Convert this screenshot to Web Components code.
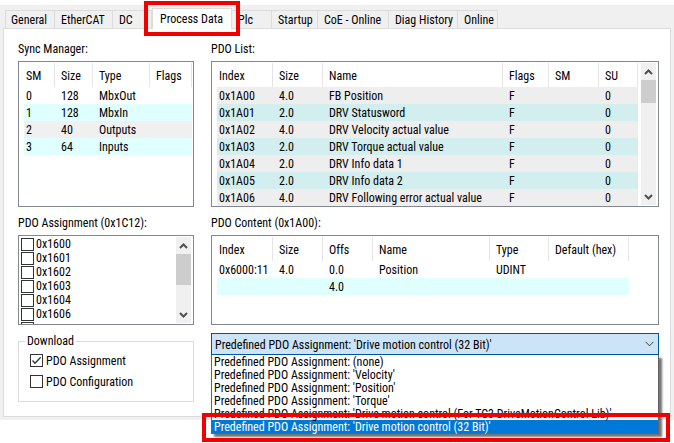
<!DOCTYPE html>
<html lang="en">
<head>
<meta charset="utf-8">
<title>Process Data</title>
<style>
  body {
    display: flow-root;
    box-sizing: border-box;
    min-height: 100vh;
    margin: 0;
    padding-bottom: 23px;
    background: #fff;
    color: #000;
    font: 12px/16px "Roboto Condensed", "Liberation Sans Narrow", "Liberation Sans", sans-serif;
    --line: #dcdcdc;
    --edge: #828790;
    --face: #f0f0f0;
    --mark: #f00000;
  }
</style>
</head>
<body>
<process-dialog></process-dialog>
<script>
class Base extends HTMLElement {
  paint(html) {
    if (!this.shadowRoot) this.attachShadow({ mode: "open" });
    this.shadowRoot.innerHTML = html;
  }
}

customElements.define("scroll-bar", class extends Base {
  connectedCallback() {
    this.paint(`
      <style>
        :host { display: flex; flex-direction: column; width: 15px; margin: 0 1px 1px 0; background: var(--face); }
        svg { display: block; width: 15px; height: 17px; fill: none; stroke: #505050; stroke-width: 2; }
        .track { flex: 1; }
        .thumb { height: var(--thumb, 23px); background: #cdcdcd; }
      </style>
      <svg viewBox="0 0 15 17"><path d="M4 11 L7.5 7.5 L11 11"/></svg>
      <div class="track"><div class="thumb"></div></div>
      <svg viewBox="0 0 15 17"><path d="M4 7 L7.5 10.5 L11 7"/></svg>`);
  }
});

customElements.define("tab-item", class extends Base {
  connectedCallback() {
    const on = this.hasAttribute("selected");
    this.paint(`
      <style>
        :host { display: block; position: relative; width: var(--w); box-sizing: border-box; }
        :host([selected]) { z-index: 1; }
        button {
          display: block; width: 100%; height: 18px; padding: 2px 0 0 6px; margin: 0;
          border: 1px solid var(--line); border-width: 1px 1px 0 0; border-radius: 0;
          background: var(--face); font: inherit; line-height: 15px; text-align: left; white-space: nowrap; color: #000;
        }
        :host([first]) button { border-left-width: 1px; padding-left: 5px; }
        :host([selected]) button { height: 21px; margin-bottom: -1px; padding: 2px 0 2px 7px; background: #fff; border-left-width: 1px; }
        .mark { position: absolute; inset: -7px -8px -8px -8px; border: 4px solid var(--mark); pointer-events: none; }
      </style>
      <button type="button" role="tab" aria-selected="${on}"><slot></slot></button>
      ${on ? '<div class="mark"></div>' : ""}`);
  }
});

customElements.define("tab-strip", class extends Base {
  connectedCallback() {
    this.paint(`
      <style>
        :host { display: flex; align-items: flex-end; height: 23px; padding-left: 2px; }
      </style>
      <slot></slot>`);
  }
});

customElements.define("titled-box", class extends Base {
  connectedCallback() {
    this.paint(`
      <style>
        :host { display: flex; flex-direction: column; min-width: 0; }
        h2 { margin: 0 0 4px; font: inherit; line-height: 16px; }
        .frame { flex: 1; display: flex; justify-content: space-between; border: 1px solid var(--edge); padding: 1px 1px 0; overflow: hidden; }
      </style>
      <h2>${this.getAttribute("caption")}</h2>
      <div class="frame"><slot></slot></div>`);
  }
});

customElements.define("data-grid", class extends Base {
  connectedCallback() {
    const heads = this.getAttribute("heads").split("|");
    const widths = this.getAttribute("widths").split("|");
    const rows = this.textContent.trim().split("\n").map(r => r.trim().split("|"));
    this.paint(`
      <style>
        :host { display: block; flex: 1; min-width: 0; padding-left: 4px; }
        table { width: 100%; table-layout: fixed; border-collapse: separate; border-spacing: 0; }
        th, td { box-sizing: border-box; padding: 2px 0 0 6px; font-weight: normal; text-align: left; white-space: nowrap; }
        th:first-child, td:first-child { padding-left: 2px; }
        th { height: 24px; border-right: 1px solid #e5e5e5; }
        td { height: 17px; line-height: 15px; }
        tbody tr:nth-child(odd) { background: var(--odd, #fff); }
        tbody tr:nth-child(even) { background: var(--even, #e0ffff); }
        :host([plain]) tbody tr:nth-child(3) { background: var(--face); }
      </style>
      <table>
        <colgroup>${widths.map(w => `<col${w === "*" ? "" : ` style="width:${w}px"`}>`).join("")}</colgroup>
        <thead><tr>${heads.map(h => `<th scope="col">${h}</th>`).join("")}</tr></thead>
        <tbody>${rows.map(r => `<tr>${heads.map((_, i) => `<td>${r[i] || ""}</td>`).join("")}</tr>`).join("")}</tbody>
      </table>`);
  }
});

customElements.define("check-item", class extends Base {
  connectedCallback() {
    this.paint(`
      <style>
        :host { display: block; }
        label { display: flex; align-items: center; gap: var(--gap, 2px); height: var(--h, 14px); line-height: 14px; white-space: nowrap; }
        .box { display: grid; }
        .box > * { grid-area: 1 / 1; }
        input { appearance: none; box-sizing: border-box; width: 13px; height: 13px; margin: 0; border: 1px solid #333; background: #fff; }
        svg { width: 13px; height: 13px; fill: none; stroke: #333; stroke-width: 1.3; visibility: hidden; pointer-events: none; }
        input:checked + svg { visibility: visible; }
      </style>
      <label><span class="box"><input type="checkbox" ${this.hasAttribute("checked") ? "checked" : ""}><svg viewBox="0 0 13 13"><path d="M2.5 6.5 L5 9.2 L10.7 3.3"/></svg></span><span><slot></slot></span></label>`);
  }
});

customElements.define("check-list", class extends Base {
  connectedCallback() {
    this.paint(`
      <style>
        :host { display: block; box-sizing: border-box; flex: 1; height: 87px; overflow: hidden; padding: 0 0 0 1px; }
      </style>
      <slot></slot>`);
  }
});

customElements.define("group-box", class extends Base {
  connectedCallback() {
    this.paint(`
      <style>
        :host { display: block; }
        fieldset { margin: 0; padding: 1px 11px 9px; border: 1px solid var(--line); min-width: 0; --h: 21px; --gap: 3px; }
        legend { margin-left: -5px; padding: 0 2px; line-height: 16px; }
      </style>
      <fieldset><legend>${this.getAttribute("caption")}</legend><slot></slot></fieldset>`);
  }
});

customElements.define("combo-box", class extends Base {
  connectedCallback() {
    const items = [...this.querySelectorAll("option")].map(o => o.textContent);
    const last = items.length - 1;
    this.paint(`
      <style>
        :host { display: block; position: relative; align-self: start; min-width: 0; }
        .field { display: grid; align-items: center; }
        .field > * { grid-area: 1 / 1; }
        select {
          appearance: none; box-sizing: border-box; width: 100%; height: 22px; margin: 0; padding: 1px 20px 0 3px;
          border: 1px solid #005499; border-radius: 0; background: #cce4f7; color: #000; font: inherit; outline: none;
        }
        svg { justify-self: end; width: 9px; height: 6px; margin-right: 5px; fill: none; stroke: #404040; pointer-events: none; }
        .menu {
          position: absolute; top: 100%; left: 0; right: 0;
          border: 1px solid #646464; border-top-width: 0; background: #fff; box-shadow: 3px 3px 2px rgba(0,0,0,.55);
        }
        ul { margin: 0; padding: 0; list-style: none; }
        li { box-sizing: border-box; height: 13px; padding: 1px 0 0 2px; line-height: 13px; white-space: nowrap; }
        li[aria-selected=true] { background: #0078d7; color: #fff; }
        .mark { position: absolute; inset: auto -12px -9px -10px; height: 21px; border: 4px solid var(--mark); pointer-events: none; }
      </style>
      <div class="field">
        <select aria-label="Predefined PDO Assignment">${items.map((t, i) => `<option${i === last ? " selected" : ""}>${t}</option>`).join("")}</select>
        <svg viewBox="0 0 9 6"><path d="M0.5 0.8 L4.5 4.8 L8.5 0.8"/></svg>
      </div>
      <div class="menu">
        <ul role="listbox" aria-label="Predefined PDO Assignment">
          ${items.map((t, i) => `<li role="option" aria-selected="${i === last}">${t}</li>`).join("")}
        </ul>
        <div class="mark"></div>
      </div>`);
  }
});

customElements.define("process-dialog", class extends Base {
  connectedCallback() {
    this.paint(`
      <style>
        :host { display: block; margin-top: 5px; padding: 0 3px 3px; background: var(--face); }
        main {
          display: grid; grid-template-columns: 176px minmax(0, 1fr); gap: 8px 17px;
          padding: 12px 11px 14px 14px; border: 1px solid var(--line); background: #fff;
        }
        .list { --odd: #eeeeee; --even: #d2eeee; margin-right: 3px; }
        .content { margin-right: 28px; }
        .short { --thumb: 31px; }
      </style>
      <tab-strip role="tablist">
        <tab-item first style="--w:50px">General</tab-item>
        <tab-item style="--w:58px">EtherCAT</tab-item>
        <tab-item style="--w:39px">DC</tab-item>
        <tab-item selected style="--w:80px">Process Data</tab-item>
        <tab-item style="--w:40px">Plc</tab-item>
        <tab-item style="--w:46px">Startup</tab-item>
        <tab-item style="--w:71px">CoE - Online</tab-item>
        <tab-item style="--w:69px">Diag History</tab-item>
        <tab-item style="--w:40px">Online</tab-item>
      </tab-strip>
      <main>
        <titled-box caption="Sync Manager:">
          <data-grid plain heads="SM|Size|Type|Flags" widths="31|38|57|*">
            0|128|MbxOut
            1|128|MbxIn
            2|40|Outputs
            3|64|Inputs
          </data-grid>
        </titled-box>
        <titled-box caption="PDO List:">
          <data-grid class="list" heads="Index|Size|Name|Flags|SM|SU" widths="56|50|*|46|50|39">
            0x1A00|4.0|FB Position|F||0
            0x1A01|2.0|DRV Statusword|F||0
            0x1A02|4.0|DRV Velocity actual value|F||0
            0x1A03|2.0|DRV Torque actual value|F||0
            0x1A04|2.0|DRV Info data 1|F||0
            0x1A05|2.0|DRV Info data 2|F||0
            0x1A06|4.0|DRV Following error actual value|F||0
          </data-grid>
          <scroll-bar></scroll-bar>
        </titled-box>
        <titled-box caption="PDO Assignment (0x1C12):">
          <check-list>
            <check-item>0x1600</check-item>
            <check-item>0x1601</check-item>
            <check-item>0x1602</check-item>
            <check-item>0x1603</check-item>
            <check-item>0x1604</check-item>
            <check-item>0x1606</check-item>
            <check-item></check-item>
          </check-list>
          <scroll-bar class="short"></scroll-bar>
        </titled-box>
        <titled-box caption="PDO Content (0x1A00):">
          <data-grid class="content" heads="Index|Size|Offs|Name|Type|Default (hex)" widths="56|50|50|*|59|80">
            0x6000:11|4.0|0.0|Position|UDINT
            ||4.0
          </data-grid>
        </titled-box>
        <group-box caption="Download">
          <check-item checked>PDO Assignment</check-item>
          <check-item>PDO Configuration</check-item>
        </group-box>
        <combo-box>
          <option>Predefined PDO Assignment: (none)</option>
          <option>Predefined PDO Assignment: 'Velocity'</option>
          <option>Predefined PDO Assignment: 'Position'</option>
          <option>Predefined PDO Assignment: 'Torque'</option>
          <option>Predefined PDO Assignment: 'Drive motion control (For TC3 DriveMotionControl Lib)'</option>
          <option>Predefined PDO Assignment: 'Drive motion control (32 Bit)'</option>
        </combo-box>
      </main>`);
  }
});
</script>
</body>
</html>
